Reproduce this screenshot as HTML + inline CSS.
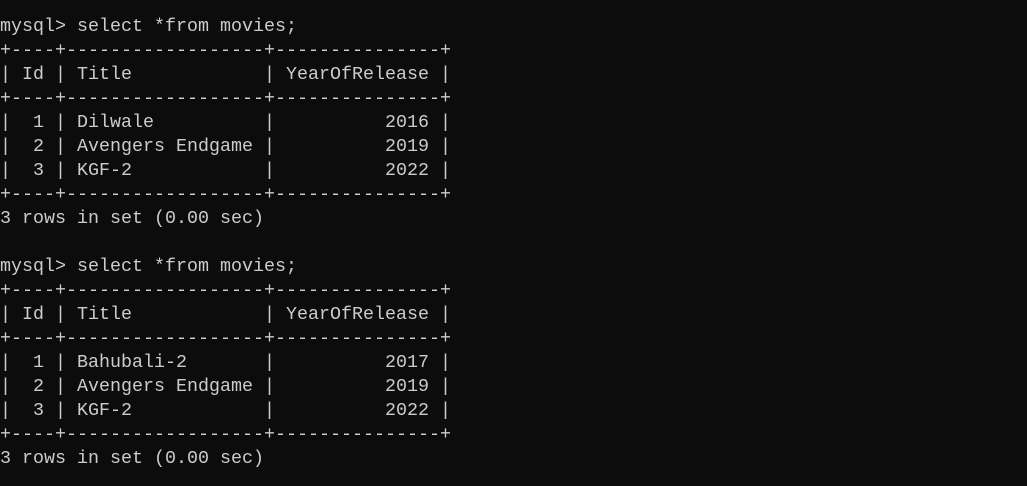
<!DOCTYPE html>
<html><head><meta charset="utf-8"><style>
html,body{margin:0;padding:0;background:#0c0c0c;width:1027px;height:486px;overflow:hidden}
pre{margin:0;position:absolute;left:0;top:15px;font-family:"Liberation Mono",monospace;font-size:18.33px;line-height:24px;color:#cccccc;letter-spacing:0}
</style></head><body><pre>mysql&gt; select *from movies;
+----+------------------+---------------+
| Id | Title            | YearOfRelease |
+----+------------------+---------------+
|  1 | Dilwale          |          2016 |
|  2 | Avengers Endgame |          2019 |
|  3 | KGF-2            |          2022 |
+----+------------------+---------------+
3 rows in set (0.00 sec)

mysql&gt; select *from movies;
+----+------------------+---------------+
| Id | Title            | YearOfRelease |
+----+------------------+---------------+
|  1 | Bahubali-2       |          2017 |
|  2 | Avengers Endgame |          2019 |
|  3 | KGF-2            |          2022 |
+----+------------------+---------------+
3 rows in set (0.00 sec)</pre></body></html>
